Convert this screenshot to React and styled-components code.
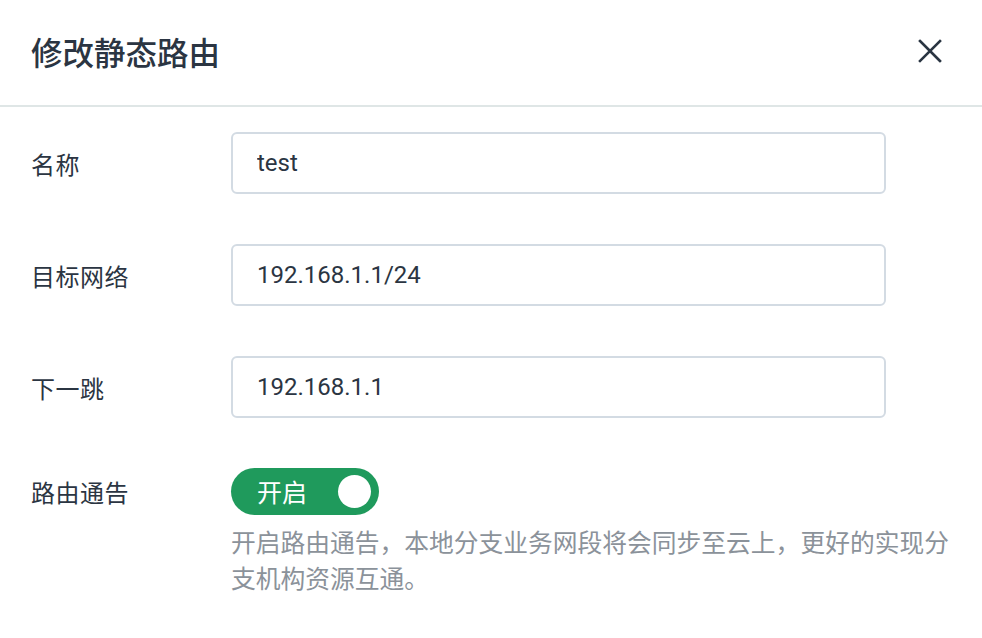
import React, { useState } from "react";
import styled, { createGlobalStyle } from "styled-components";

const GlobalStyle = createGlobalStyle`
  html, body {
    margin: 0;
    padding: 0;
    background: #ffffff;
  }
  body {
    font-family: Roboto, "Noto Sans CJK SC", sans-serif;
    color: #2b3542;
  }
`;

const fields = [
  { label: "名称", value: "test" },
  { label: "目标网络", value: "192.168.1.1/24" },
  { label: "下一跳", value: "192.168.1.1" },
];

const App = () => {
  const [values, setValues] = useState(fields.map((f) => f.value));
  const [advertise, setAdvertise] = useState(true);

  return (
    <>
      <GlobalStyle />
      <Dialog>
        <Header>
          <Title>修改静态路由</Title>
          <CloseButton aria-label="关闭">
            <svg width="24" height="24" viewBox="0 0 24 24">
              <path
                d="M2 2 L22 22 M22 2 L2 22"
                stroke="#2a3542"
                strokeWidth="2.6"
                strokeLinecap="square"
                fill="none"
              />
            </svg>
          </CloseButton>
        </Header>
        <Body>
          {fields.map((f, i) => (
            <Row key={f.label}>
              <Label>{f.label}</Label>
              <Input
                value={values[i]}
                onChange={(e) => {
                  const next = [...values];
                  next[i] = e.target.value;
                  setValues(next);
                }}
              />
            </Row>
          ))}
          <Row $top>
            <Label>路由通告</Label>
            <Control>
              <Switch $on={advertise} onClick={() => setAdvertise(!advertise)}>
                <SwitchText>{advertise ? "开启" : "关闭"}</SwitchText>
                <Knob $on={advertise} />
              </Switch>
              <Help>
                开启路由通告<Punct>，</Punct>本地分支业务网段将会同步至云上
                <Punct>，</Punct>更好的实现分支机构资源互通。
              </Help>
            </Control>
          </Row>
        </Body>
      </Dialog>
    </>
  );
};

const Dialog = styled.div`
  width: 982px;
  height: 638px;
  overflow: hidden;
  background: #ffffff;
`;

const Header = styled.div`
  height: 107px;
  box-sizing: border-box;
  display: flex;
  align-items: center;
  justify-content: space-between;
  padding: 0 40px 4px 31px;
  border-bottom: 2px solid #dfe6e6;
`;

const Title = styled.h2`
  margin: 0;
  font-family: "Noto Sans CJK SC", sans-serif;
  font-size: 31.5px;
  font-weight: 500;
  color: #2b3542;
`;

const CloseButton = styled.button`
  width: 24px;
  height: 24px;
  padding: 0;
  border: none;
  background: none;
  cursor: pointer;
  display: flex;
`;

const Body = styled.div`
  padding: 25px 0 0 31px;
  display: flex;
  flex-direction: column;
  gap: 50px;
`;

const Row = styled.div`
  display: flex;
  align-items: ${(p) => (p.$top ? "flex-start" : "center")};
`;

const Label = styled.div`
  width: 200px;
  flex-shrink: 0;
  font-family: "Noto Sans CJK SC", sans-serif;
  font-size: 24px;
  letter-spacing: 0.5px;
  color: #2b3542;
  line-height: 47px;
`;

const Input = styled.input`
  width: 655px;
  height: 62px;
  box-sizing: border-box;
  padding: 0 24px;
  border: 2px solid #d3dbe3;
  border-radius: 6px;
  font-family: Roboto, "Noto Sans CJK SC", sans-serif;
  font-size: 24px;
  color: #2b3542;
  outline: none;
`;

const Control = styled.div`
  display: flex;
  flex-direction: column;
  align-items: flex-start;
`;

const Switch = styled.button`
  position: relative;
  width: 148px;
  height: 47px;
  padding: 0 0 0 26px;
  border: none;
  border-radius: 24px;
  background: ${(p) => (p.$on ? "#1f9a5c" : "#c0c6cc")};
  display: flex;
  align-items: center;
  cursor: pointer;
`;

const SwitchText = styled.span`
  font-family: "Noto Sans CJK SC", sans-serif;
  font-size: 25px;
  color: #ffffff;
  line-height: 1;
`;

const Knob = styled.span`
  position: absolute;
  top: 7px;
  right: ${(p) => (p.$on ? "8px" : "107px")};
  width: 33px;
  height: 33px;
  border-radius: 50%;
  background: #ffffff;
`;

const Help = styled.p`
  margin: 8px 0 0;
  width: 724px;
  font-family: "Noto Sans CJK SC", sans-serif;
  font-size: 24.75px;
  line-height: 36px;
  color: #8b929a;
`;

const Punct = styled.span`
  margin-right: 0.1px;
`;

export default App;
